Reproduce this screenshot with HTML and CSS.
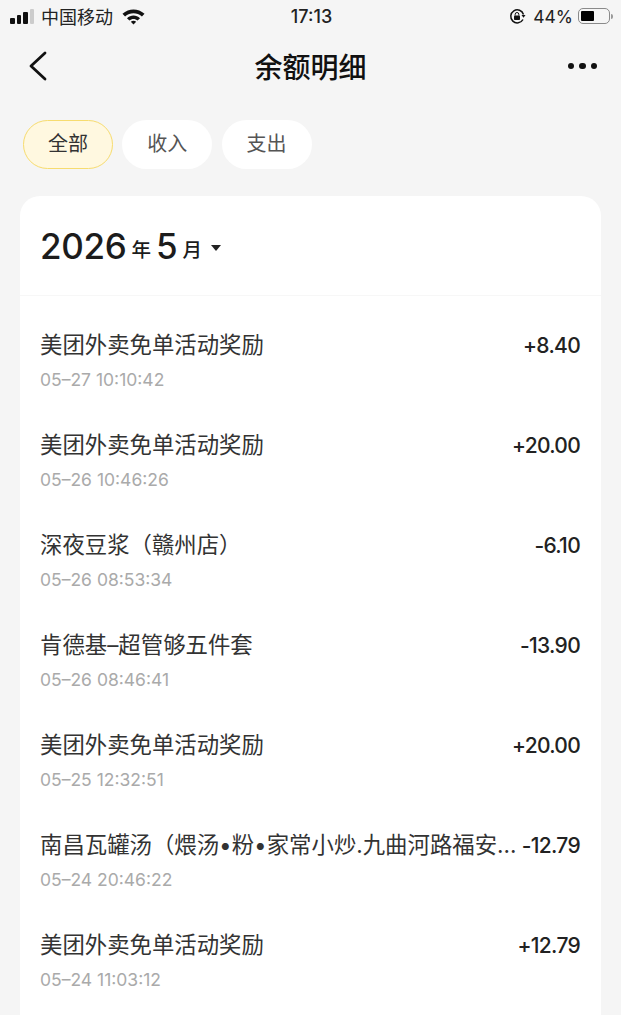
FILE: index.html
```html
<!DOCTYPE html>
<html lang="zh-CN">
<head>
  <meta charset="UTF-8" />
  <meta name="viewport" content="width=device-width, initial-scale=1.0" />
  <title>余额明细</title>
  <link rel="stylesheet" href="styles.css">
</head>
<body>
  <div class="status-bar">
    <div class="status-left">
      <div class="signal"><i></i><i></i><i></i><i class="off"></i></div>
      <span>中国移动</span>
      <svg class="wifi" width="23" height="17" viewBox="0 0 24 17">
        <path d="M.5 5.6C7.2 -.4 16.800 -.4 23.500 5.600L20.800 8.400C15.600 3.900 8.400 3.900 3.200 8.400Z" fill="#111"/>
        <path d="M5.200 10.200C9.100 6.700 14.900 6.700 18.800 10.200L16.300 12.700C13.800 10.500 10.200 10.500 7.700 12.700Z" fill="#111"/>
        <path d="M9.200 14C10.900 12.700 13.100 12.700 14.800 14L12 16.900Z" fill="#111"/>
      </svg>
    </div>
    <div class="status-time">17:13</div>
    <div class="status-right">
      <svg width="17" height="17" viewBox="0 0 17 17">
        <path d="M14 11.500A6.500 6.500 0 1 1 14.500 6.500" fill="none" stroke="#111" stroke-width="1.500"/>
        <path d="M12.500 7H16.500L14.500 9.800Z" fill="#111"/>
        <rect x="5" y="7.500" width="6" height="4.500" rx=".8" fill="#111"/>
        <path d="M6.200 7.500V6.300a1.800 1.800 0 0 1 3.600 0V7.500" fill="none" stroke="#111" stroke-width="1"/>
      </svg>
      <span>44%</span>
      <div class="battery"><div class="battery-level"></div></div>
      <div class="battery-cap"></div>
    </div>
  </div>

  <div class="nav-bar">
    <svg class="back" width="20" height="30" viewBox="0 0 20 30">
      <path d="M17 2L3 15L17 28" fill="none" stroke="#111" stroke-width="2.800" stroke-linecap="round" stroke-linejoin="round"/>
    </svg>
    <h1>余额明细</h1>
    <div class="more"><i></i><i></i><i></i></div>
  </div>

  <div class="tabs">
    <div class="tab active">全部</div>
    <div class="tab">收入</div>
    <div class="tab">支出</div>
  </div>

  <div class="card">
    <div class="card-head">
      <span class="big">2026</span><span class="unit">年</span><span class="big">5</span><span class="unit">月</span>
      <div class="caret"></div>
    </div>
    <div class="list">
      <div class="row">
        <div class="row-top"><div class="name">美团外卖免单活动奖励</div><div class="amount">+8.40</div></div>
        <div class="time">05–27 10:10:42</div>
      </div>
      <div class="row">
        <div class="row-top"><div class="name">美团外卖免单活动奖励</div><div class="amount">+20.00</div></div>
        <div class="time">05–26 10:46:26</div>
      </div>
      <div class="row">
        <div class="row-top"><div class="name">深夜豆浆（赣州店）</div><div class="amount">-6.10</div></div>
        <div class="time">05–26 08:53:34</div>
      </div>
      <div class="row">
        <div class="row-top"><div class="name">肯德基–超管够五件套</div><div class="amount">-13.90</div></div>
        <div class="time">05–26 08:46:41</div>
      </div>
      <div class="row">
        <div class="row-top"><div class="name">美团外卖免单活动奖励</div><div class="amount">+20.00</div></div>
        <div class="time">05–25 12:32:51</div>
      </div>
      <div class="row">
        <div class="row-top"><div class="name">南昌瓦罐汤（煨汤•粉•家常小炒.九曲河路福安...</div><div class="amount">-12.79</div></div>
        <div class="time">05–24 20:46:22</div>
      </div>
      <div class="row">
        <div class="row-top"><div class="name">美团外卖免单活动奖励</div><div class="amount">+12.79</div></div>
        <div class="time">05–24 11:03:12</div>
      </div>
    </div>
  </div>
</body>
</html>
```

FILE: styles.css
```css
body {
  display: flex;
  flex-direction: column;
  margin: 0;
  height: 1015px;
  overflow: hidden;
  background-color: #f5f5f5;
  font-family: "Inter", "Noto Sans CJK SC", sans-serif;
  color: #222;
}

.status-bar {
  display: flex;
  align-items: center;
  justify-content: space-between;
  height: 32px;
  padding: 0 8px 0 10px;
  font-size: 18px;
  color: #222;
}

.status-left {
  display: flex;
  align-items: center;
  flex: 1;
}

.status-left span {
  margin-left: 7px;
}

.signal {
  display: flex;
  align-items: flex-end;
  gap: 2px;
  height: 15px;
}

.signal i {
  display: block;
  width: 4.500px;
  border-radius: 1px;
  background-color: #111;
}

.signal i:nth-child(1) { height: 6px; }
.signal i:nth-child(2) { height: 9px; }
.signal i:nth-child(3) { height: 12px; }
.signal i:nth-child(4) { height: 15px; }

.signal .off {
  background-color: #ccc;
}

.wifi {
  margin-left: 9px;
}

.status-time {
  font-size: 18px;
  font-weight: 500;
}

.status-right {
  display: flex;
  align-items: center;
  justify-content: flex-end;
  flex: 1;
}

.status-right span {
  margin-left: 7px;
  font-size: 17.500px;
}

.battery {
  width: 32px;
  height: 16px;
  margin-left: 5px;
  padding: 2px;
  box-sizing: border-box;
  border: 1px solid #8a8a8a;
  border-radius: 5px;
}

.battery-level {
  width: 13px;
  height: 100%;
  border-radius: 1px;
  background-color: #000;
}

.battery-cap {
  width: 2px;
  height: 5px;
  margin-left: 1px;
  border-radius: 0 2px 2px 0;
  background-color: #999;
}

.nav-bar {
  display: grid;
  grid-template-columns: 1fr auto 1fr;
  align-items: center;
  height: 68px;
  padding: 0 24px;
}

.back {
  margin-left: 4px;
}

.nav-bar h1 {
  margin: 0;
  font-size: 28px;
  font-weight: 500;
  color: #111;
}

.more {
  display: flex;
  justify-content: flex-end;
  gap: 5px;
}

.more i {
  display: block;
  width: 6.500px;
  height: 6.500px;
  border-radius: 50%;
  background-color: #111;
}

.tabs {
  display: flex;
  gap: 9.250px;
  margin-top: 20px;
  padding-left: 23px;
}

.tab {
  width: 90px;
  height: 49px;
  box-sizing: border-box;
  border-radius: 25px;
  background-color: #fff;
  font-size: 20px;
  line-height: 48px;
  text-align: center;
  color: #555;
}

.tab.active {
  border: 1px solid #f7dc6f;
  background-color: #fff8e0;
  line-height: 46px;
  color: #333;
}

.card {
  flex: 1;
  margin: 27px 20px 0;
  border-radius: 20px 20px 0 0;
  background-color: #fff;
}

.card-head {
  display: flex;
  align-items: center;
  height: 99px;
  padding-left: 20px;
  border-bottom: 1px solid #f7f7f7;
  color: #1c1c1c;
}

.big {
  font-size: 35px;
  font-weight: 500;
  letter-spacing: -0.3px;
}

.unit {
  margin: 5px 5px 0 5px;
  font-size: 19.500px;
  font-weight: 500;
}

.caret {
  width: 0;
  height: 0;
  margin: 5px 0 0 4px;
  border-top: 6px solid #222;
  border-left: 5.500px solid transparent;
  border-right: 5.500px solid transparent;
}

.row {
  display: flex;
  flex-direction: column;
  height: 100px;
  padding: 33px 21px 0 20px;
  box-sizing: border-box;
}

.row-top {
  display: flex;
  justify-content: space-between;
  gap: 4px;
  height: 32px;
  line-height: 32px;
}

.name {
  font-size: 22.400px;
  white-space: nowrap;
  color: #333;
}

.amount {
  flex-shrink: 0;
  margin-top: 1px;
  font-size: 21px;
  font-weight: 500;
  letter-spacing: -0.7px;
  color: #222;
}

.time {
  margin-top: 5px;
  font-size: 17.500px;
  line-height: 28px;
  color: #aaa;
}
```
